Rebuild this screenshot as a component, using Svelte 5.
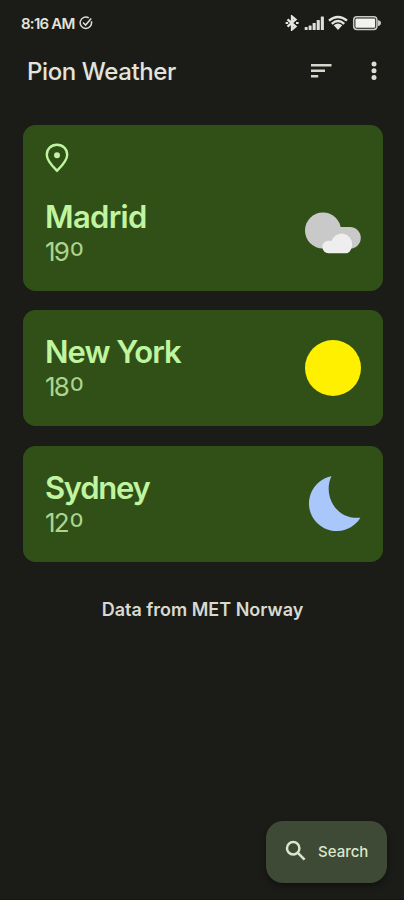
<script>
  const cities = [
    { name: 'Madrid', temp: '19', icon: 'cloud', located: true, spacing: '-0.7px' },
    { name: 'New York', temp: '18', icon: 'sun', located: false, spacing: '-1px' },
    { name: 'Sydney', temp: '12', icon: 'moon', located: false, spacing: '-1.3px' }
  ];
</script>

<div class="screen">
  <div class="status">
    <span class="time">8:16 AM</span>
    <svg class="check" width="14" height="14" viewBox="0 0 14 14" fill="none" stroke="#dcdcd8" stroke-width="1.5">
      <path d="M9.8 1.8A5.7 5.7 0 1 0 12.4 5.3" />
      <path d="M4 6.5l2.6 2.6 5.6-6.6" />
    </svg>
    <svg class="system" width="98" height="16" viewBox="0 0 98 16">
      <path d="M2.5 4.4l8 7.1L7 14.4V1.6l3.5 2.9-8 7.1" fill="none" stroke="#e4e4e0" stroke-width="2.3" />
      <path d="M.6 8h2.6M11 8h2.6" stroke="#e4e4e0" stroke-width="2.2" />
      <g fill="#dededb">
        <rect x="19.7" y="12" width="2.9" height="3" rx=".6" />
        <rect x="23.6" y="10.4" width="3" height="4.6" rx=".6" />
        <rect x="27.6" y="7.9" width="3.1" height="7.1" rx=".6" />
        <rect x="31.7" y="5" width="3.1" height="10" rx=".6" />
        <rect x="35.8" y="1.5" width="3.1" height="13.5" rx=".6" />
      </g>
      <g fill="none" stroke="#e4e4e0" stroke-width="2.4">
        <path d="M44 5.7Q53 -1.8 62 5.7" />
        <path d="M46.8 8.8Q53 3.2 59.2 8.8" />
      </g>
      <path d="M48.7 10.3Q53 6.7 57.3 10.3L53 15Z" fill="#e4e4e0" />
      <rect x="68.7" y="1.8" width="23.2" height="12.6" rx="3.2" fill="none" stroke="#c9c9c5" stroke-width="1.5" />
      <rect x="70.4" y="3.4" width="19.8" height="9.4" rx="1.2" fill="#f2f2ef" />
      <path d="M92.8 5q3.2 .6 3.2 3.1t-3.2 3.1z" fill="#c9c9c5" />
    </svg>
  </div>

  <header>
    <h1>Pion Weather</h1>
    <svg class="sort" width="22" height="16" viewBox="0 0 22 16" fill="#d5d7cd">
      <rect x="1" y="1" width="20.5" height="2.5" />
      <rect x="1" y="6.5" width="14" height="2.5" />
      <rect x="1" y="12" width="7.2" height="2.5" />
    </svg>
    <svg class="more" width="6" height="20" viewBox="0 0 6 20" fill="#dcddd5">
      <circle cx="3" cy="3" r="2.5" />
      <circle cx="3" cy="9.7" r="2.5" />
      <circle cx="3" cy="16.4" r="2.5" />
    </svg>
  </header>

  <main>
    {#each cities as city}
      <article class:located={city.located}>
        <div class="info">
          {#if city.located}
            <svg class="pin" width="24" height="30" viewBox="0 0 24 30">
              <path d="M12 1.8C6.1 1.8 1.8 6.1 1.8 11.7c0 6.2 6.2 11.9 10.2 16 4-4.1 10.2-9.8 10.2-16C22.2 6.1 17.9 1.8 12 1.8z" fill="none" stroke="#c0f5a0" stroke-width="2.4" />
              <circle cx="12" cy="12.2" r="3" fill="#c0f5a0" />
            </svg>
          {/if}
          <h2 style:letter-spacing={city.spacing}>{city.name}</h2>
          <p>{city.temp}<span>º</span></p>
        </div>
        <svg class="weather" width="58" height="58" viewBox="0 0 58 58">
          {#if city.icon === 'cloud'}
            <circle cx="19" cy="22.5" r="18" fill="#c9c9c9" />
            <path d="M34 19H46a10.8 10.8 0 0 1 0 21.6H28z" fill="#c9c9c9" />
            <path d="M24.5 45.2a6.2 6.2 0 0 1 0-12.4c1.2 0 2.2.1 3 .4a10.5 10.5 0 0 1 20.6 3.4c0 4-2.4 8.6-5.4 8.6z" fill="#eee" />
          {:else if city.icon === 'sun'}
            <circle cx="29" cy="29" r="28" fill="#fff000" />
          {:else}
            <path d="M27.5 1.2C18.8 18.5 30.5 45.2 56.4 42.7A27.7 27.7 0 1 1 27.5 1.2z" fill="#a9c7fb" />
          {/if}
        </svg>
      </article>
    {/each}
  </main>

  <p class="source">Data from MET Norway</p>

  <button class="search">
    <svg width="22" height="22" viewBox="0 0 22 22" fill="none" stroke="#dbe7ca" stroke-width="2.5">
      <circle cx="8.2" cy="8.2" r="6.2" />
      <path d="M12.6 12.6l7 7" />
    </svg>
    <span>Search</span>
  </button>
</div>

<style>
  :global(body) { background: #1b1c18; }
  .screen {
    width: 404px; height: 900px; box-sizing: border-box; overflow: hidden;
    display: flex; flex-direction: column;
    border-bottom: 1px solid #1c1212;
    background: #1b1c18; color: #e3e3db;
    font-family: Inter, Roboto, sans-serif;
  }
  h1, h2, p { margin: 0; white-space: nowrap; }
  .status { height: 46px; flex: none; display: flex; align-items: center; padding: 0 21px 0 21px; }
  .time { font-size: 15px; font-weight: 600; letter-spacing: -0.75px; }
  .check { margin-left: 4px; }
  .system { margin-left: auto; }
  header { height: 50px; flex: none; display: flex; align-items: center; padding: 0 27px; }
  h1 { font-size: 24px; line-height: 30px; font-weight: 550; letter-spacing: -0.4px; padding-top: 1px; }
  .sort { margin-left: auto; margin-right: 39px; }
  main { display: flex; flex-direction: column; gap: 19.5px; padding: 28.5px 21px 0 22.5px; }
  article {
    height: 116px; box-sizing: border-box; border-radius: 12.5px; background: #315018;
    padding: 23px 21px 0 22.5px; display: flex; justify-content: space-between;
  }
  article.located { height: 166px; padding-top: 18.5px; }
  .info { display: flex; flex-direction: column; }
  .pin { margin-bottom: 24.5px; }
  h2 { font-size: 31px; line-height: 38px; font-weight: 600; color: #c0f5a0; }
  article p { font-size: 26px; line-height: 32px; color: #abd68e; letter-spacing: -1.8px; }
  article p span { font-size: 34px; font-weight: 300; line-height: 0; vertical-align: -6px; margin-left: 1.5px; }
  .weather { margin-top: 6px; flex: none; }
  .located .weather { margin-top: 65px; }
  .source { text-align: center; margin: 36.5px 0 0 1px; font-size: 18px; line-height: 24px; font-weight: 600; color: #d8dacf; }
  .search {
    margin: auto 17px 16.5px auto; width: 121.5px; height: 61.5px; flex: none;
    display: flex; align-items: center; gap: 11px; padding: 0 0 1px 19.5px;
    border: 0; border-radius: 17px; background: #3e4a35; color: #dbe7ca;
    font: 500 15px Inter, Roboto, sans-serif;
    box-shadow: 0 3px 6px #0006;
  }
</style>
